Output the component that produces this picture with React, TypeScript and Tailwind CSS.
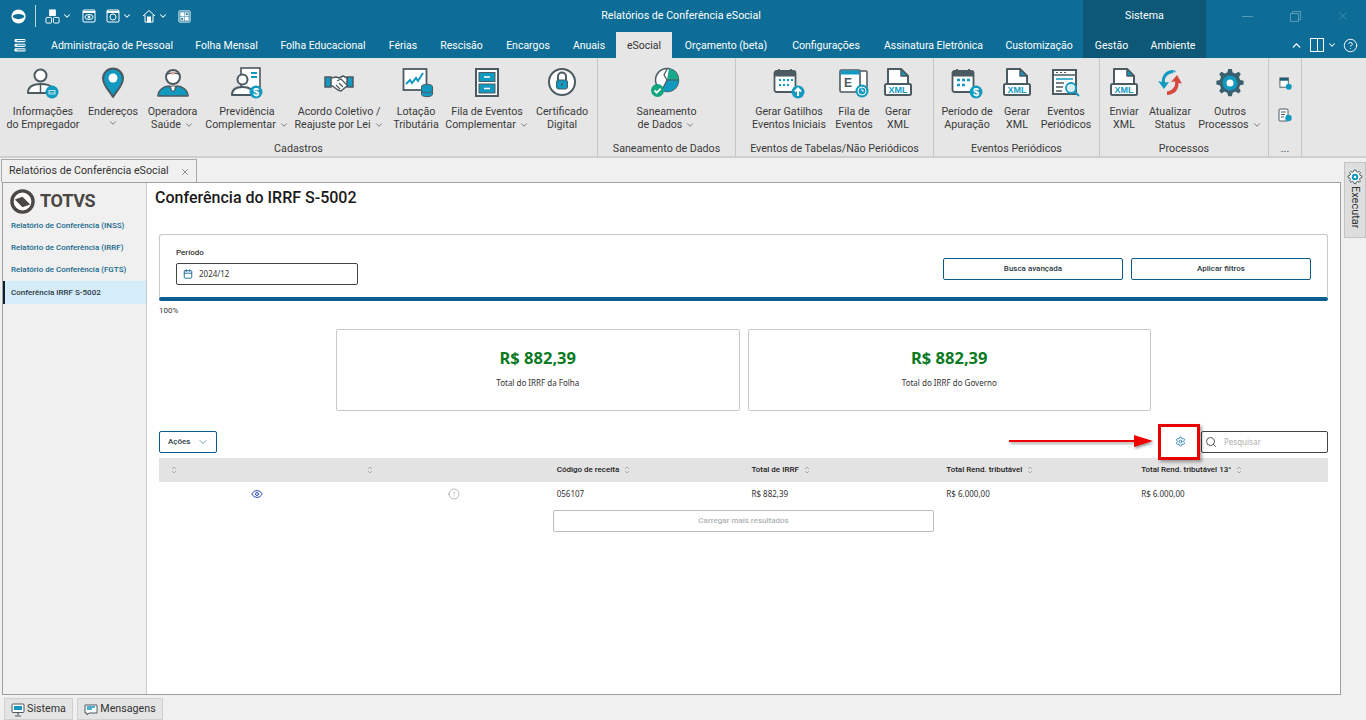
import type { ReactNode } from 'react';
import { ChevronDown, ChevronUp, CircleHelp, Search, Calendar, X, Eye, Info, Settings } from 'lucide-react';

const D = '#4c5a61';
const T = '#1199bf';
const GEAR = 'M14.2 2h3.6l.9 3.4 2.8 1.2 3-1.8 2.3 2.3-1.8 3 1.2 2.8 3.4.9v3.6l-3.4.9-1.2 2.8 1.8 3-2.3 2.3-3-1.8-2.8 1.2-.9 3.4h-3.6l-.9-3.4-2.8-1.2-3 1.8-2.3-2.3 1.8-3-1.2-2.8-3.4-.9v-3.6l3.4-.9 1.2-2.8-1.8-3 2.3-2.3 3 1.8 2.8-1.2z';

const tabs = [
  ['Administração de Pessoal', 'w-[144px]'],
  ['Folha Mensal', 'w-[85px]'],
  ['Folha Educacional', 'w-[108px]'],
  ['Férias', 'w-[52px]'],
  ['Rescisão', 'w-[65px]'],
  ['Encargos', 'w-[68px]'],
  ['Anuais', 'w-[54px]'],
];
const tabsAfter = [
  ['Orçamento (beta)', 'w-[108px]'],
  ['Configurações', 'w-[92px]'],
  ['Assinatura Eletrônica', 'w-[123px]'],
  ['Customização', 'w-[88px]'],
];

/* ---- ribbon icons ---- */
function Svg({ children }: { children: ReactNode }) {
  return (
    <svg viewBox="0 0 32 32" className="w-[32px] h-[32px] overflow-visible" fill="none">
      {children}
    </svg>
  );
}

function Badge({ children }: { children?: ReactNode }) {
  return (
    <g>
      <circle cx="25" cy="25" r="6.5" fill={T} />
      {children}
    </g>
  );
}

const PersonIcon = () => (
  <Svg>
    <circle cx="13.5" cy="8.5" r="6" fill="#fff" stroke={D} strokeWidth="2" />
    <path d="M1 26c0-6 5-9 12.5-9S24 19 25 21v5z" fill="#fff" stroke={D} strokeWidth="2" strokeLinejoin="round" />
    <path d="M13.5 18v8" stroke={D} strokeWidth="1.5" />
    <Badge>
      <rect x="21.5" y="23" width="7" height="4.5" fill="#bfe6f2" />
      <path d="M22.5 24.5h5M22.5 26h5" stroke={T} />
    </Badge>
  </Svg>
);
const PinIcon = () => (
  <Svg>
    <path d="M16 30C11 22 6 18 6 11.5a10 10 0 0 1 20 0C26 18 21 22 16 30z" fill={T} stroke={D} strokeWidth="2" strokeLinejoin="round" />
    <circle cx="16" cy="11" r="4.5" fill="#fff" />
  </Svg>
);
const DoctorIcon = () => (
  <Svg>
    <circle cx="16" cy="10" r="7" fill="#fff" stroke={D} strokeWidth="2" />
    <path d="M9.5 7.5c3-2 10-2 13 0" stroke={D} strokeWidth="1.5" />
    <circle cx="16" cy="6" r="1.8" fill="#e0a8a0" />
    <path d="M1 29c0-6 6-10 11-10l4 5 4-5c5 0 11 4 11 10z" fill={T} stroke={D} strokeWidth="1.5" strokeLinejoin="round" />
    <path d="M13.5 19h5l-1 5h-3z" fill="#fff" stroke={D} />
  </Svg>
);
const PensionIcon = () => (
  <Svg>
    <rect x="10" y="1" width="19" height="24" fill="#fff" stroke={D} strokeWidth="1.6" />
    <path d="M20 6h6M20 10h6" stroke={T} strokeWidth="2" />
    <circle cx="11.5" cy="12.5" r="5" fill="#fff" stroke={D} strokeWidth="2" />
    <path d="M1 28c0-6 4-8 10.5-8S22 22 22 28z" fill="#fff" stroke={D} strokeWidth="2" strokeLinejoin="round" />
    <Badge>
      <text x="25" y="29" textAnchor="middle" fontSize="11" fontWeight="700" fill="#fff" fontFamily="Liberation Sans, sans-serif">$</text>
    </Badge>
  </Svg>
);
const HandshakeIcon = () => (
  <Svg>
    <path d="M2 10h6v10H2zM24 10h6v10h-6z" fill={T} stroke={D} strokeWidth="1.5" />
    <path d="M8 11l5-1 3 1 4-2 4 2v8l-6 5-3-1-7-5z" fill="#fff" stroke={D} strokeWidth="1.5" strokeLinejoin="round" />
    <path d="M14 14l4-2 6 6M13 18l4 4M16 16l4 4" stroke={D} strokeWidth="1.2" />
  </Svg>
);
const ChartIcon = () => (
  <Svg>
    <g transform="translate(2 0)">
      <rect x="1.5" y="2" width="23" height="21" fill="#fff" stroke={D} strokeWidth="1.8" />
      <path d="M4 17l4-4 2 3 4-5 2 3 5-8" stroke={T} strokeWidth="2" />
      <ellipse cx="25" cy="19.5" rx="5.5" ry="2.2" fill={T} stroke={D} />
      <path d="M19.5 19.5v8c0 1.2 2.5 2.2 5.5 2.2s5.5-1 5.5-2.2v-8M19.5 23.5c0 1.2 2.5 2.2 5.5 2.2s5.5-1 5.5-2.2" fill={T} stroke={D} />
    </g>
  </Svg>
);
const DrawerIcon = () => (
  <Svg>
    <rect x="5" y="2" width="22" height="27" fill="#fff" stroke={D} strokeWidth="2" />
    <rect x="8" y="5.5" width="16" height="9" fill={T} stroke={D} />
    <rect x="8" y="17" width="16" height="9" fill={T} stroke={D} />
    <path d="M13 10h6M13 21.5h6" stroke="#fff" strokeWidth="1.5" />
  </Svg>
);
const LockIcon = () => (
  <Svg>
    <circle cx="16" cy="15" r="13" fill="#fff" stroke={D} strokeWidth="2" />
    <path d="M12 14V9.5a4 4 0 0 1 8 0V14" stroke={D} strokeWidth="2" />
    <rect x="10.5" y="13" width="11" height="9" rx="2" fill={T} stroke={D} />
    <path d="M16 16v3" stroke={D} strokeWidth="1.5" />
  </Svg>
);
const PieIcon = () => (
  <Svg>
    <g transform="translate(-1 0)">
      <circle cx="17" cy="13" r="11.5" fill="#fff" stroke={D} strokeWidth="1.5" />
      <path d="M17 13l2-11.5A11.5 11.5 0 0 1 28.5 13z" fill="#18a88a" />
      <path d="M17 13h11.5A11.5 11.5 0 0 1 12 23.5z" fill={T} />
      <path d="M17 2l-3 6 3 5-5 10M17 13h11" stroke={D} strokeWidth="1.2" />
      <circle cx="7.5" cy="23.5" r="6.5" fill="#10a57f" />
      <path d="M4.5 23.5l2.2 2.2 4-4" stroke="#fff" strokeWidth="1.8" />
    </g>
  </Svg>
);
const CalendarBase = () => (
  <g>
    <rect x="1.5" y="4" width="21" height="21" rx="2" fill="#fff" stroke={D} strokeWidth="1.8" />
    <rect x="2" y="4" width="20" height="5.5" fill={D} />
    <path d="M6 2v3M18 2v3" stroke={D} strokeWidth="1.8" />
  </g>
);
const CalendarUpIcon = () => (
  <Svg>
    <CalendarBase />
    <path d="M6 13h2M10 13h2M14 13h2M18 13h2M6 18h2M10 18h2M14 18h2" stroke={T} strokeWidth="2" />
    <Badge>
      <path d="M25 29v-7M22 24.5l3-3 3 3" stroke="#fff" strokeWidth="2" />
    </Badge>
  </Svg>
);
const CalendarMoneyIcon = () => (
  <Svg>
    <CalendarBase />
    <path d="M6 13h3M11 13h3M16 13h3M6 18h3M11 18h3" stroke={T} strokeWidth="2.5" />
    <Badge>
      <text x="25" y="29" textAnchor="middle" fontSize="11" fontWeight="700" fill="#fff" fontFamily="Liberation Sans, sans-serif">$</text>
    </Badge>
  </Svg>
);
const EventQueueIcon = () => (
  <Svg>
    <rect x="12" y="4" width="17" height="20" rx="1" fill="#fff" stroke={D} strokeWidth="1.5" />
    <rect x="2" y="3" width="20" height="22" rx="1.5" fill="#fff" stroke={D} strokeWidth="1.6" />
    <rect x="2.5" y="3.5" width="19" height="4" fill={T} />
    <text x="10" y="20" textAnchor="middle" fontSize="12" fontWeight="700" fill={D} fontFamily="Liberation Sans, sans-serif">E</text>
    <circle cx="24" cy="24" r="6.5" fill={T} />
    <circle cx="24" cy="24" r="4" stroke="#fff" />
    <path d="M24 21.5V24h2" stroke="#fff" />
  </Svg>
);
const XmlIcon = () => (
  <Svg>
    <path d="M6 19V2h13l7 7v10" fill="#fff" stroke={D} strokeWidth="2" strokeLinejoin="round" />
    <path d="M19 2v7h7z" fill={T} stroke={D} strokeWidth="1.5" strokeLinejoin="round" />
    <rect x="3" y="17" width="26" height="11" rx="1.5" fill="#fff" stroke={D} strokeWidth="2" />
    <text x="16" y="26" textAnchor="middle" fontSize="9" fontWeight="700" fill={T} fontFamily="Liberation Sans, sans-serif">XML</text>
  </Svg>
);
const PeriodicIcon = () => (
  <Svg>
    <rect x="3" y="3" width="23" height="24" fill="#fff" stroke={D} strokeWidth="2" />
    <path d="M3 8h23" stroke={D} strokeWidth="1.5" />
    <path d="M6 5.5h2M10 5.5h2M14 5.5h2" stroke={D} />
    <path d="M6 12h17" stroke={T} strokeWidth="1.5" />
    <path d="M6 16h8M6 20h7M6 24h6" stroke={D} strokeWidth="1.5" />
    <circle cx="21" cy="21" r="5" fill="#d8eff6" stroke={T} strokeWidth="1.8" />
    <path d="M25 25l4 4" stroke={T} strokeWidth="2" />
  </Svg>
);
const RefreshIcon = () => (
  <Svg>
    <path d="M19 3C12 3 7.5 8 8 15l-4-1 6 8 5-7-4 .5C10 11 13 7 19 6z" fill={T} />
    <path d="M19 3l3 1-2 2z" fill={T} />
    <path d="M13 28c7 0 12-5 11.5-12l3.5.5-5-8.5-6 7 4-.5c1 4.500-2 9-8 10z" fill="#d6493f" />
  </Svg>
);
const GearIcon = () => (
  <Svg>
    <path d={GEAR} fill="#38606f" />
    <circle cx="16" cy="16" r="7.5" fill={T} />
    <circle cx="16" cy="16" r="3.5" fill="#fff" />
  </Svg>
);

/* ---- ribbon parts ---- */
function RibbonItem({
  icon,
  lines,
  width,
  chevron,
}: {
  icon: ReactNode;
  lines: string[];
  width: string;
  chevron?: 'inline' | 'below';
}) {
  return (
    <div className={`${width} flex flex-col items-center pt-[9px]`}>
      <div className="h-[32px] flex items-center justify-center">{icon}</div>
      <div className="mt-[6px] text-center leading-[13px] whitespace-nowrap">
        {lines.map((line, i) => (
          <div key={i} className="flex items-center justify-center">
            {line}
            {chevron === 'inline' && i === lines.length - 1 && (
              <ChevronDown size={10} strokeWidth={2} className="ml-[3px] text-[#666]" />
            )}
          </div>
        ))}
        {chevron === 'below' && (
          <div className="flex justify-center">
            <ChevronDown size={10} strokeWidth={2} className="text-[#666]" />
          </div>
        )}
      </div>
    </div>
  );
}

function RibbonGroup({ width, label, pad, children }: { width: string; label: string; pad: string; children: ReactNode }) {
  return (
    <div className={`${width} h-full flex flex-col border-r border-[#c6c6c6]`}>
      <div className={`flex-1 flex ${pad}`}>{children}</div>
      <div className="h-[14px] text-center leading-[14px] whitespace-nowrap">{label}</div>
    </div>
  );
}

function SortIcon() {
  return (
    <svg viewBox="0 0 8 10" className="w-[6px] h-[8px] ml-[3px] inline-block" fill="none" stroke="#8a98a0" strokeWidth="1">
      <path d="M1.5 3.5L4 1l2.5 2.5M1.5 6.5L4 9l2.500-2.500" />
    </svg>
  );
}

function TotalCard({ label }: { label: string }) {
  return (
    <div className="h-[82px] border border-[#c8c8c8] rounded-[2px] flex flex-col items-center font-['Noto_Sans',sans-serif]">
      <div className="mt-[17px] text-[16.5px] leading-[22px] font-bold text-[#0b7a22]">R$ 882,39</div>
      <div className="mt-[8px] text-[8px] leading-[12px] text-[#333]">{label}</div>
    </div>
  );
}

export default function App() {
  return (
    <div className="w-[1366px] h-[720px] overflow-hidden flex flex-col bg-[#f0f0f0] text-[10.7px] text-[#333] font-['Roboto',sans-serif]">
      {/* Title bar */}
      <div className="h-[32px] bg-[#0d6d96] flex items-center text-white relative shrink-0">
        <div className="w-[35px] flex justify-center pl-[2px]">
          <svg viewBox="0 0 16 16" className="w-[15px] h-[15px]">
            <circle cx="8" cy="8" r="7.5" fill="#fff" />
            <ellipse cx="8" cy="8" rx="6" ry="2.8" fill="#0d6d96" />
          </svg>
        </div>
        <div className="w-px h-[22px] bg-white/70" />
        <div className="flex items-center ml-[9px]">
          <svg viewBox="0 0 16 16" className="w-[15px] h-[15px]" fill="none" stroke="#fff">
            <rect x="5" y="1" width="6" height="6" fill="#fff" />
            <rect x="1" y="9" width="6" height="6" rx="1" />
            <rect x="9" y="9" width="6" height="6" rx="1" />
          </svg>
          <ChevronDown size={10} strokeWidth={2.5} className="ml-[2px]" />
        </div>
        <svg viewBox="0 0 14 14" className="w-[14px] h-[14px] ml-[10px]" fill="none" stroke="#fff">
          <rect x="1" y="1" width="12" height="12" rx="1" />
          <path d="M1 3h12" strokeWidth="2" />
          <ellipse cx="7" cy="8" rx="4" ry="2.5" />
          <circle cx="7" cy="8" r="1" fill="#fff" />
        </svg>
        <div className="flex items-center ml-[10px]">
          <svg viewBox="0 0 14 14" className="w-[14px] h-[14px]" fill="none" stroke="#fff">
            <rect x="1" y="1" width="12" height="12" rx="1" />
            <path d="M1 3h12" strokeWidth="2" />
            <circle cx="7" cy="8" r="3" />
          </svg>
          <ChevronDown size={10} strokeWidth={2.5} className="ml-[2px]" />
        </div>
        <div className="flex items-center ml-[10px]">
          <svg viewBox="0 0 14 14" className="w-[14px] h-[14px]" fill="none" stroke="#fff">
            <path d="M1 7l6-5.5L13 7M3 6v7h8V6" />
            <rect x="5.5" y="8" width="3" height="5" fill="#fff" />
          </svg>
          <ChevronDown size={10} strokeWidth={2.5} className="ml-[2px]" />
        </div>
        <svg viewBox="0 0 14 14" className="w-[13px] h-[13px] ml-[10px]" fill="none" stroke="#fff">
          <rect x="1" y="1" width="12" height="12" rx="1" />
          <rect x="3" y="3" width="3.5" height="3.5" fill="#fff" />
          <rect x="8" y="3" width="3" height="3" />
          <rect x="3" y="8" width="3" height="3" />
          <rect x="7.5" y="7.5" width="3.5" height="3.5" fill="#fff" />
        </svg>
        <div className="absolute left-[401px] w-[560px] pt-[1px] text-center">Relatórios de Conferência eSocial</div>
        <div className="absolute left-[1083px] top-0 w-[123px] h-[32px] pt-[1px] bg-[#0d5877] flex items-center justify-center">Sistema</div>
        <div className="absolute right-0 top-0 h-[32px] w-[160px] flex items-center text-white/30">
          <div className="w-[48px] ml-[17px] flex justify-center"><div className="w-[11px] h-px bg-white/30" /></div>
          <div className="w-[48px] flex justify-center">
            <svg viewBox="0 0 11 11" className="w-[11px] h-[11px]" fill="none" stroke="currentColor">
              <rect x=".5" y="2.5" width="8" height="8" />
              <path d="M2.5 2.5v-2h8v8h-2" />
            </svg>
          </div>
          <div className="w-[47px] flex justify-center"><X size={14} strokeWidth={1.2} /></div>
        </div>
      </div>

      {/* Ribbon tabs */}
      <div className="h-[26px] bg-[#0d6d96] flex items-stretch text-white text-[10.5px] relative shrink-0">
        <div className="w-[40px] flex items-center justify-center">
          <svg viewBox="0 0 12 14" className="w-[12px] h-[13px]" fill="#fff">
            <rect x="0" y="0" width="12" height="3.5" rx="1.5" />
            <rect x="0" y="5" width="12" height="3.5" rx="1.5" />
            <rect x="0" y="10" width="12" height="3.5" rx="1.5" />
            <rect x="2.5" y="1.2" width="9" height="1" fill="#0d6d96" />
            <rect x="2.5" y="6.2" width="9" height="1" fill="#0d6d96" />
            <rect x="2.5" y="11.2" width="9" height="1" fill="#0d6d96" />
          </svg>
        </div>
        {tabs.map(([name, w]) => (
          <div key={name} className={`${w} pt-[1px] flex items-center justify-center whitespace-nowrap`}>{name}</div>
        ))}
        <div className="w-[56px] pt-[1px] bg-[#e6e6e6] text-[#333] flex items-center justify-center">eSocial</div>
        {tabsAfter.map(([name, w]) => (
          <div key={name} className={`${w} pt-[1px] flex items-center justify-center whitespace-nowrap`}>{name}</div>
        ))}
        <div className="w-[123px] pt-[1px] bg-[#0d5877] flex">
          <div className="w-[57px] flex items-center justify-center">Gestão</div>
          <div className="w-[66px] flex items-center justify-center">Ambiente</div>
        </div>
        <div className="flex items-center ml-[84px]">
          <ChevronUp size={13} strokeWidth={2.5} />
          <div className="w-[14px] h-[14px] border-[1.5px] border-white ml-[7px] flex justify-end">
            <div className="w-[6px] h-full bg-[#0d6d96] border-l-[1.5px] border-white" />
          </div>
          <ChevronDown size={10} strokeWidth={2.5} className="ml-[3px]" />
          <CircleHelp size={15} strokeWidth={1.5} className="ml-[6px]" />
        </div>
      </div>

      {/* Ribbon body */}
      <div className="h-[100px] bg-[#e6e6e6] flex border-b-[2px] border-[#cfcfcf] shrink-0 text-[#3a3a3a]">
        <RibbonGroup width="w-[598px]" label="Cadastros" pad="pl-[4px]">
          <RibbonItem width="w-[78px]" icon={<PersonIcon />} lines={['Informações', 'do Empregador']} />
          <RibbonItem width="w-[62px]" icon={<PinIcon />} lines={['Endereços']} chevron="below" />
          <RibbonItem width="w-[57px]" icon={<DoctorIcon />} lines={['Operadora', 'Saúde']} chevron="inline" />
          <RibbonItem width="w-[92px]" icon={<PensionIcon />} lines={['Previdência', 'Complementar']} chevron="inline" />
          <RibbonItem width="w-[92px]" icon={<HandshakeIcon />} lines={['Acordo Coletivo /', 'Reajuste por Lei']} chevron="inline" />
          <RibbonItem width="w-[62px]" icon={<ChartIcon />} lines={['Lotação', 'Tributária']} />
          <RibbonItem width="w-[80px]" icon={<DrawerIcon />} lines={['Fila de Eventos', 'Complementar']} chevron="inline" />
          <RibbonItem width="w-[70px]" icon={<LockIcon />} lines={['Certificado', 'Digital']} />
        </RibbonGroup>
        <RibbonGroup width="w-[138px]" label="Saneamento de Dados" pad="">
          <RibbonItem width="w-full" icon={<PieIcon />} lines={['Saneamento', 'de Dados']} chevron="inline" />
        </RibbonGroup>
        <RibbonGroup width="w-[198px]" label="Eventos de Tabelas/Não Periódicos" pad="pl-[15px]">
          <RibbonItem width="w-[76px]" icon={<CalendarUpIcon />} lines={['Gerar Gatilhos', 'Eventos Iniciais']} />
          <RibbonItem width="w-[54px]" icon={<EventQueueIcon />} lines={['Fila de', 'Eventos']} />
          <RibbonItem width="w-[34px]" icon={<XmlIcon />} lines={['Gerar', 'XML']} />
        </RibbonGroup>
        <RibbonGroup width="w-[166px]" label="Eventos Periódicos" pad="pl-[6px]">
          <RibbonItem width="w-[54px]" icon={<CalendarMoneyIcon />} lines={['Período de', 'Apuração']} />
          <RibbonItem width="w-[46px]" icon={<XmlIcon />} lines={['Gerar', 'XML']} />
          <RibbonItem width="w-[52px]" icon={<PeriodicIcon />} lines={['Eventos', 'Periódicos']} />
        </RibbonGroup>
        <RibbonGroup width="w-[169px]" label="Processos" pad="pl-[6px]">
          <RibbonItem width="w-[36px]" icon={<XmlIcon />} lines={['Enviar', 'XML']} />
          <RibbonItem width="w-[56px]" icon={<RefreshIcon />} lines={['Atualizar', 'Status']} />
          <RibbonItem width="w-[64px]" icon={<GearIcon />} lines={['Outros', 'Processos']} chevron="inline" />
        </RibbonGroup>
        <div className="w-[33px] h-full flex flex-col items-center border-r border-[#c6c6c6]">
          <svg viewBox="0 0 14 14" className="w-[13px] h-[13px] mt-[19px]" fill="none">
            <rect x="1" y="1" width="9" height="10" fill="#fff" stroke={D} />
            <rect x="1" y="1" width="9" height="3" fill="#1b5f78" />
            <circle cx="10.5" cy="10.5" r="3.2" fill={T} />
          </svg>
          <svg viewBox="0 0 14 14" className="w-[14px] h-[14px] mt-[18px]" fill="none">
            <rect x="1" y="1" width="9" height="12" rx="1" fill="#fff" stroke={D} />
            <path d="M3 4h5M3 6.5h4M3 9h3" stroke={D} />
            <circle cx="10.5" cy="10" r="3.2" fill={T} />
          </svg>
          <div className="mt-auto h-[14px] leading-[14px]">...</div>
        </div>
      </div>

      {/* Document tab strip */}
      <div className="h-[24px] flex items-end shrink-0 relative">
        <div className="ml-[1px] w-[196px] h-[23px] pt-[1px] border border-b-0 border-[#a8a8a8] bg-[#f0f0f0] flex items-center pl-[7px] whitespace-nowrap">
          Relatórios de Conferência eSocial
          <X size={10} strokeWidth={1.5} className="ml-[11px] text-[#555]" />
        </div>
        <div className="absolute left-[1344px] top-[4px] w-[22px] h-[76px] border border-[#c4c4c4] bg-[#dedede] flex flex-col items-center pt-[6px]">
          <svg viewBox="0 0 32 32" className="w-[16px] h-[16px] shrink-0" fill="none">
            <path d={GEAR} fill="#fff" stroke={D} strokeWidth="2" />
            <circle cx="16" cy="16" r="6.5" fill={T} />
            <circle cx="16" cy="16" r="2.5" fill="#fff" />
          </svg>
          <div className="[writing-mode:vertical-rl] text-[11px] leading-[14px] mt-[1px]">Executar</div>
        </div>
      </div>

      {/* Main frame */}
      <div className="flex-1 ml-[2px] mr-[25px] border border-[#a0a0a0] bg-white flex min-h-0">
        <div className="w-[144px] bg-[#f0f0f0] border-r border-[#c8c8c8] shrink-0 text-[8px] font-medium text-[#17688d] pt-[4px]">
          <div className="flex items-center h-[28px] pl-[7px]">
            <svg viewBox="0 0 26 26" className="w-[25px] h-[25px]">
              <circle cx="13" cy="13" r="11" fill="#fff" stroke="#4a4744" strokeWidth="3.5" />
              <path d="M5 11l8-3 8 8-8 3z" fill="#4a4744" />
            </svg>
            <span className="ml-[5px] text-[18px] leading-none font-bold text-[#4a4744] tracking-[-0.3px]">TOTVS</span>
          </div>
          <div className="h-[22px] flex items-center pl-[8px]">Relatório de Conferência (INSS)</div>
          <div className="h-[22px] flex items-center pl-[8px]">Relatório de Conferência (IRRF)</div>
          <div className="h-[22px] flex items-center pl-[8px]">Relatório de Conferência (FGTS)</div>
          <div className="h-[23px] flex items-center pl-[6px] bg-[#d5ecfb] border-l-[2px] border-[#12202a] text-[#2a3a44]">Conferência IRRF S-5002</div>
        </div>

        <div className="flex-1 px-[12px] min-w-0 relative">
          <h1 className="ml-[-4px] mt-[4px] text-[16px] leading-[22px] font-medium text-[#1a1a1a]">Conferência do IRRF S-5002</h1>

          {/* Filters */}
          <div className="mt-[25px] h-[63px] border border-b-0 border-[#c8c8c8] rounded-t-[3px] flex items-end justify-between pl-[16px] pr-[16px] pb-[12px]">
            <div>
              <div className="text-[8px] leading-[12px] font-medium mb-[4px]">Período</div>
              <div className="w-[182px] h-[22px] border border-[#444] rounded-[2px] flex items-center pl-[6px] text-[8px] font-['Noto_Sans',sans-serif]">
                <Calendar size={10} className="text-[#0b5c8a]" />
                <span className="ml-[6px]">2024/12</span>
              </div>
            </div>
            <div className="flex gap-[8px] mb-[5px]">
              <div className="w-[180px] h-[22px] border border-[#0b5c8a] rounded-[2px] flex items-center justify-center text-[8px] font-medium text-[#2a3a44]">Busca avançada</div>
              <div className="w-[180px] h-[22px] border border-[#0b5c8a] rounded-[2px] flex items-center justify-center text-[8px] font-medium text-[#2a3a44]">Aplicar filtros</div>
            </div>
          </div>
          <div className="h-[4px] bg-[#0a5f8f] rounded-full" />
          <div className="mt-[5px] text-[8px] leading-[10px]">100%</div>

          {/* Totals */}
          <div className="mt-[13px] w-[815px] grid grid-cols-2 gap-[8px] ml-[177px]">
            <TotalCard label="Total do IRRF da Folha" />
            <TotalCard label="Total do IRRF do Governo" />
          </div>

          {/* Table toolbar */}
          <div className="mt-[19px] h-[23px] flex items-center justify-between">
            <div className="w-[58px] h-[22px] border border-[#0b5c8a] rounded-[2px] flex items-center pl-[8px] text-[8px] font-medium text-[#2a3a44]">
              Ações
              <ChevronDown size={12} strokeWidth={1.2} className="ml-[7px] text-[#0b5c8a]" />
            </div>
            <div className="flex items-center">
              <Settings size={11} className="text-[#2a86b8] mr-[15px]" />
              <div className="w-[127px] h-[22px] border border-[#444] rounded-[2px] flex items-center pl-[3px] text-[8px] text-[#b0b0b0] font-['Noto_Sans',sans-serif]">
                <Search size={12} className="text-[#555]" />
                <span className="ml-[7px]">Pesquisar</span>
              </div>
            </div>
          </div>

          {/* Table */}
          <div className="mt-[5px] h-[24px] bg-[#e3e3e3] grid grid-cols-6 items-center text-[8px] font-medium text-[#1a1a1a]">
            <div className="pl-[9px]"><SortIcon /></div>
            <div className="pl-[10px]"><SortIcon /></div>
            <div className="pl-[8px]">Código de receita <SortIcon /></div>
            <div className="pl-[8px]">Total de IRRF <SortIcon /></div>
            <div className="pl-[8px]">Total Rend. tributável <SortIcon /></div>
            <div className="pl-[8px]">Total Rend. tributável 13° <SortIcon /></div>
          </div>
          <div className="h-[23px] grid grid-cols-6 items-center text-[8px] text-[#333] font-['Noto_Sans',sans-serif]">
            <div className="flex justify-center pl-[1px]"><Eye size={12} className="text-[#2f4fbd]" /></div>
            <div className="flex justify-center pl-[5px]"><Info size={12} strokeWidth={1.2} className="text-[#888] rotate-180" /></div>
            <div className="pl-[8px]">056107</div>
            <div className="pl-[8px]">R$ 882,39</div>
            <div className="pl-[8px]">R$ 6.000,00</div>
            <div className="pl-[8px]">R$ 6.000,00</div>
          </div>
          <div className="mt-[5px] ml-[394px] w-[381px] h-[22px] border border-[#bdbdbd] rounded-[2px] flex items-center justify-center text-[8px] font-medium text-[#aeb4b8]">Carregar mais resultados</div>

          {/* Callout over the toolbar */}
          <div className="absolute left-[1011px] top-[241px] w-[42px] h-[36px] border-[3px] border-[#e60000] shadow-[2px_2px_3px_rgba(0,0,0,0.35)]" />
          <svg viewBox="0 0 144 12" className="absolute left-[862px] top-[252px] w-[144px] h-[12px] drop-shadow-[1px_2px_1px_rgba(0,0,0,0.35)]">
            <path d="M0 5h125V0l19 6-19 6V7H0z" fill="#f00000" />
          </svg>
        </div>
      </div>

      {/* Status bar */}
      <div className="h-[25px] flex items-end pl-[4px] gap-[4px] shrink-0">
        <div className="w-[69px] h-[22px] pt-[1px] bg-[#e4e4e4] border border-[#d0d0d0] flex items-center justify-center gap-[2px]">
          <svg viewBox="0 0 14 14" className="w-[14px] h-[14px]" fill="none">
            <rect x="1" y="1" width="12" height="8.5" rx="1" fill="#fff" stroke={D} />
            <rect x="3" y="3" width="8" height="4" fill={T} />
            <path d="M7 10v2M4 13h6" stroke={D} strokeWidth="1.2" />
          </svg>
          Sistema
        </div>
        <div className="w-[86px] h-[22px] pt-[1px] bg-[#e4e4e4] border border-[#d0d0d0] flex items-center justify-center gap-[2px]">
          <svg viewBox="0 0 14 14" className="w-[14px] h-[14px]" fill="none">
            <path d="M1 2h12v8H5l-2 2v-2H1z" fill="#fff" stroke={D} />
            <path d="M3 4h8M3 6h5" stroke={T} strokeWidth="1.5" />
          </svg>
          Mensagens
        </div>
      </div>
    </div>
  );
}
